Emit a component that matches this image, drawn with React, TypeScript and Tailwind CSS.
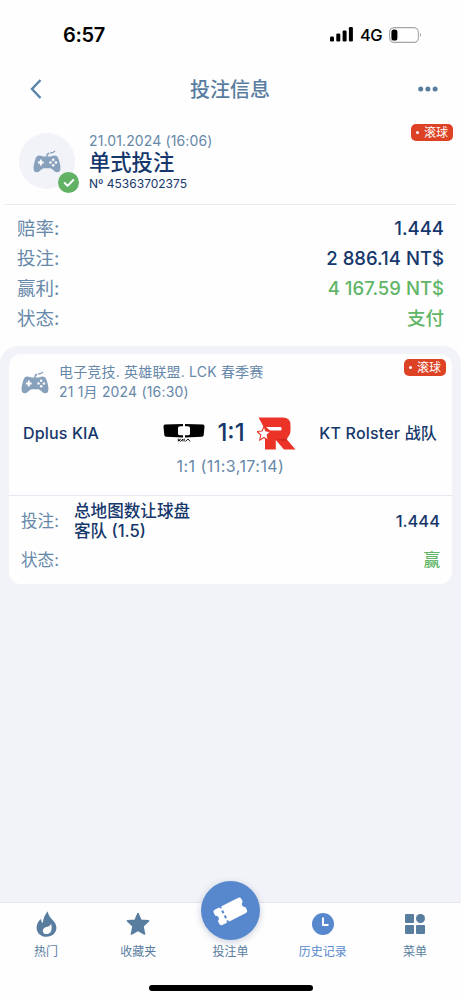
import type { ReactNode } from "react";

type IconProps = { className?: string };

const Gamepad = ({ className }: IconProps) => (
    <svg viewBox="0 0 28 23" className={className} fill="none">
        <path
            d="M6.5 5.600c2 0 2.600 1 4.200 1h6.600c1.600 0 2.200-1 4.200-1 2.400 0 3.500 1.400 4.400 4.400.9 2.900 1.700 6.200 1.500 8.900-.2 2.400-1.700 3.600-3.500 3.300-3.200-.5-4.300-4-6.900-4h-6c-2.600 0-3.700 3.500-6.900 4-1.800.3-3.300-.9-3.500-3.300-.2-2.700.6-6 1.500-8.900.9-3 2-4.400 4.400-4.400Z"
            fill="currentColor"
        />
        <path d="M13.800 7c0-2.300.7-3.400 2.400-3.700M17.200 3c2 0 3.600-.5 4.900-2.100" stroke="currentColor" strokeWidth="1.400" />
        <path d="M7.800 9.600v5.800M4.900 12.500h5.800" stroke="white" strokeWidth="1.900" />
        <circle cx="20.200" cy="9.800" r="1.250" fill="white" />
        <circle cx="20.200" cy="15.200" r="1.250" fill="white" />
        <circle cx="17.500" cy="12.500" r="1.250" fill="white" />
        <circle cx="22.900" cy="12.500" r="1.250" fill="white" />
    </svg>
);

const DplusLogo = () => (
    <svg viewBox="0 0 42 20" className="h-5 w-[42px]">
        <path d="M2 1.500 20 1v2.300H17q-2 0-2 1.500v6q0 1.500 2 1.500h3V14.400L3.200 13.800Q1.500 13.700 1.300 12L.5 3.200Q.5 1.700 2 1.500Z" />
        <path d="M40 1.500 22 1v2.300H25q2 0 2 1.500v6q0 1.500-2 1.500h-3V14.400L38.800 13.800q1.700-.1 1.900-1.800l.8-8.800Q41.500 1.700 40 1.500Z" />
        <path d="M15.300 15.700v2.700M15.300 17.500l2.500-1.500M16 17.200l1.600 1.200 2.200-2.400V18.400M21.200 15.700v2.700M22.400 18.500l2.700-2.500 2 2.500" fill="none" stroke="black" strokeWidth=".9" />
    </svg>
);

const KtLogo = () => (
    <svg viewBox="-1 0 39 33" className="h-[33px] w-[39px]">
        <path d="M.5.5h24.500q7.500 0 7.500 7.500v5q0 6-4.500 8.500l9.500 11H26L17.800 23v9.500H7V10.500h-1Z" fill="#eb3427" />
        <path d="M8 10h14.500q1 0 1 1v1.400q0 1-1 1H12Z" fill="white" />
        <path d="m18.500 22.500 9.500-1 2.500-1.700-2.800 4.200-2 .3Z" fill="#cf271d" />
        <path d="m6 9.500 1.900 4.500 5 .5-3.700 3.500 1.100 5.100L6 20.500l-4.300 2.600 1.100-5.100-3.700-3.500 5-.5Z" fill="white" stroke="#eb3427" strokeWidth="1.100" />
    </svg>
);

const Flame = () => (
    <svg viewBox="0 0 21 26" className="h-[26px] w-[21px]">
        <path fillRule="evenodd" d="M12 .3c-.2 4.500 3.400 7 5.900 10.200 1.600 2 2.500 4 2.500 6.300 0 5.100-4.200 9-9.900 9S.6 21.900.6 16.700c0-3.700 1.800-6.800 4.600-9-.1 2 .2 3.300 1.500 4.300C7.500 7 8.600 3.500 12 .3Zm3.200 12.400c-.8 2-2.700 2.700-4.700 3.200-2.300.6-3.700 2-3.700 4 0 2 1.500 3.200 3.700 3.200 4.500 0 6-4.400 4.700-10.400Z" fill="currentColor" />
    </svg>
);

const Star = () => (
    <svg viewBox="0 0 24 24" className="h-6 w-6">
        <path d="m12 1.500 2.900 6.700 7.600.7-5.600 5.300 1.600 7.800-6.500-3.800L5.500 22l1.600-7.800-5.600-5.300 7.600-.7Z" fill="currentColor" stroke="currentColor" strokeWidth="1.600" strokeLinejoin="round" />
    </svg>
);

const Ticket = () => (
    <svg viewBox="0 0 38 30" className="h-[30px] w-[38px]">
        <g transform="rotate(-27 19 15)">
            <path d="M5 6.500H31.500q2.200 0 2.200 2.200v3.400a3 3 0 0 0 0 5.800v3.400q0 2.200-2.200 2.200H5q-2.200 0-2.200-2.200v-3.400a3 3 0 0 0 0-5.800V8.700Q2.800 6.500 5 6.500Z" fill="white" />
            <path d="M11.300 5v20" stroke="#5788cd" strokeWidth="2" strokeDasharray="3 2.600" />
        </g>
    </svg>
);

const Clock = () => (
    <svg viewBox="0 0 22 22" className="h-[22px] w-[22px]">
        <circle cx="11" cy="11" r="11" fill="currentColor" />
        <path d="M11 4.500v7.500h5.500" fill="none" stroke="white" strokeWidth="1.900" />
    </svg>
);

const Grid = () => (
    <svg viewBox="0 0 20 20" className="h-5 w-5" fill="currentColor">
        <rect width="9" height="9" rx="1" />
        <circle cx="15.500" cy="4.500" r="4.500" />
        <rect y="11" width="9" height="9" rx="1" />
        <rect x="11" y="11" width="9" height="9" rx="1" />
    </svg>
);

const LiveBadge = () => (
    <div className="flex h-[17px] w-[42px] items-center rounded-[5px] bg-[#dd4224] pl-[5px] text-[12px] leading-none text-white">
        <span className="mr-[5px] h-[3px] w-[3px] rounded-full bg-white" />
        <span className="whitespace-nowrap">滚球</span>
    </div>
);

const StatusBar = () => (
    <div className="flex h-[62px] items-center justify-between pl-[63px] pr-[38px] pt-[7px] text-black">
        <span className="text-[20px] font-semibold leading-6 tracking-[-0.3px]">6:57</span>
        <div className="flex items-center">
            <svg viewBox="0 0 23 15" className="h-[15px] w-[23px]">
                <rect y="9.500" width="4" height="5" rx="1.200" />
                <rect x="6.300" y="6.500" width="4" height="8" rx="1.200" />
                <rect x="12.600" y="3.500" width="4" height="11" rx="1.200" />
                <rect x="18.900" y="0" width="4" height="14.500" rx="1.200" />
            </svg>
            <span className="ml-[7px] w-[22px] text-[16.500px] font-medium leading-6 tracking-[-0.6px]">4G</span>
            <svg viewBox="0 0 34 16" className="ml-[7px] h-4 w-[34px]">
                <rect x=".6" y=".6" width="28.800" height="14.800" rx="4.600" fill="none" stroke="#a5a5a5" strokeWidth="1.100" />
                <rect x="2.400" y="2.400" width="6" height="11.200" rx="2.600" />
                <path d="M31 5.500q2 2.300 0 4.500Z" fill="#999" />
            </svg>
        </div>
    </div>
);

const totals = [
    { label: "赔率:", value: "1.444", color: "text-[#15376b]" },
    { label: "投注:", value: "2 886.14 NT$", color: "text-[#15376b]" },
    { label: "赢利:", value: "4 167.59 NT$", color: "text-[#61b567]" },
    { label: "状态:", value: "支付", color: "text-[#61b567]" },
];

type TabProps = { icon: ReactNode; label: string; active?: boolean };

const Tab = ({ icon, label, active }: TabProps) => (
    <div className={`flex flex-1 flex-col items-center ${active ? "text-[#5788cd]" : "text-[#597d9f]"}`}>
        <div className="flex h-[40px] items-center justify-center pt-px">{icon}</div>
        <span className="text-[12px] leading-[18px]">{label}</span>
    </div>
);

const App = () => {
    return (
        <div className="flex h-[1000px] w-[461px] flex-col overflow-hidden bg-[#fefefe] font-['Inter','Noto_Sans_CJK_SC',sans-serif] text-[#6688a9]">
            <StatusBar />

            <header className="flex h-[54px] items-center justify-between pl-[30px] pr-[23px]">
                <svg viewBox="0 0 12 20" className="h-5 w-3">
                    <path d="M10.500 1 2 10l8.500 9" fill="none" stroke="#5b83aa" strokeWidth="2.400" />
                </svg>
                <h1 className="pt-[2px] text-[20px] font-medium leading-[30px] text-[#597da0]">投注信息</h1>
                <svg viewBox="0 0 20 6" className="h-[6px] w-5" fill="#597da0">
                    <circle cx="2.700" cy="3" r="2.500" />
                    <circle cx="9.900" cy="3" r="2.500" />
                    <circle cx="17.100" cy="3" r="2.500" />
                </svg>
            </header>

            <section className="mx-[5px] flex h-[89px] border-b border-[#ececef]">
                <div className="relative ml-[14px] mt-[17px] flex h-14 w-14 items-center justify-center rounded-full bg-[#f2f3f8]">
                    <Gamepad className="h-[23px] w-7 text-[#87a0bb]" />
                    <div className="absolute -bottom-1 -right-1 flex h-[21px] w-[21px] items-center justify-center rounded-full bg-[#61b265]">
                        <svg viewBox="0 0 12 10" className="h-[10px] w-3">
                            <path d="m1.700 5 2.900 2.900L10.300 2" fill="none" stroke="white" strokeWidth="2" strokeLinecap="round" strokeLinejoin="round" />
                        </svg>
                    </div>
                </div>
                <div className="ml-[14px] mt-[15px] flex-1">
                    <div className="text-[14px] leading-[19px] tracking-[0.12px]">21.01.2024 (16:06)</div>
                    <div className="text-[21.300px] font-medium leading-[24px] text-[#15376b]">单式投注</div>
                    <div className="text-[12px] leading-[20px] text-[#15376b]">Nº 45363702375</div>
                </div>
                <div className="mr-[3px] mt-2">
                    <LiveBadge />
                </div>
            </section>

            <section className="flex h-[141px] flex-col pl-[17px] pr-[17px] pt-[8px]">
                {totals.map((row) => (
                    <div key={row.label} className="flex h-[30px] items-center justify-between">
                        <span className="text-[18.500px] leading-[30px]">{row.label}</span>
                        <span className={`text-[18.500px] font-medium leading-[30px] tracking-[0.02px] ${row.color}`}>{row.value}</span>
                    </div>
                ))}
            </section>

            <main className="flex-1 rounded-t-[18px] bg-[#f2f3f8] px-[9px] pt-[8px]">
                <article className="h-[230px] rounded-[12px] bg-[#fefefe]">
                    <div className="flex h-[54px] pt-[4px]">
                        <Gamepad className="ml-[12px] mt-[13px] h-[23px] w-[28px] text-[#87a0bb]" />
                        <div className="ml-[10px] mt-[4px] flex-1 text-[14px] leading-[20px] tracking-[0.18px]">
                            <div>电子竞技. 英雄联盟. LCK 春季赛</div>
                            <div>21 1月 2024 (16:30)</div>
                        </div>
                        <div className="mr-[6px] mt-px">
                            <LiveBadge />
                        </div>
                    </div>
                    <div className="grid h-[50px] grid-cols-[140px_162px_140px] items-center text-[#15376b]">
                        <span className="pl-[14px] text-[16px] font-medium tracking-[0.15px]">Dplus KIA</span>
                        <div className="flex items-center pl-[14px]">
                            <DplusLogo />
                            <span className="w-[52px] text-center text-[24px] font-medium leading-[30px]">1:1</span>
                            <KtLogo />
                        </div>
                        <span className="whitespace-nowrap pr-[14px] text-right text-[16px] font-medium tracking-[0.18px]">KT Rolster 战队</span>
                    </div>
                    <div className="h-[38px] border-b border-[#e8e8f2] text-center text-[16px] leading-[17px] tracking-[0.45px]">1:1 (11:3,17:14)</div>
                    <div className="mt-[5px] flex h-[40px] items-center px-[12px]">
                        <span className="w-[53px] text-[16.600px]">投注:</span>
                        <div className="flex-1 text-[16.600px] font-medium leading-[20px] text-[#15376b]">
                            <div>总地图数让球盘</div>
                            <div>客队 (1.5)</div>
                        </div>
                        <span className="text-[16.500px] font-medium text-[#15376b]">1.444</span>
                    </div>
                    <div className="mt-[7px] flex h-[24px] items-center justify-between px-[12px] text-[16.600px]">
                        <span>状态:</span>
                        <span className="font-medium text-[#61b567]">赢</span>
                    </div>
                </article>
            </main>

            <footer className="relative h-[98px] border-t border-[#e5e5ef] bg-[#fefefe]">
                <nav className="flex">
                    <Tab icon={<Flame />} label="热门" />
                    <Tab icon={<Star />} label="收藏夹" />
                    <Tab icon={null} label="投注单" />
                    <Tab icon={<Clock />} label="历史记录" active />
                    <Tab icon={<Grid />} label="菜单" />
                </nav>
                <div className="absolute -top-[22px] left-[201px] flex h-[59px] w-[59px] items-center justify-center rounded-full bg-[#5788cd] shadow-[0_2px_7px_rgba(40,60,110,0.25)]">
                    <Ticket />
                </div>
                <div className="mx-auto mt-[24px] h-[6px] w-[164px] rounded-full bg-black" />
            </footer>
        </div>
    );
};

export default App;
